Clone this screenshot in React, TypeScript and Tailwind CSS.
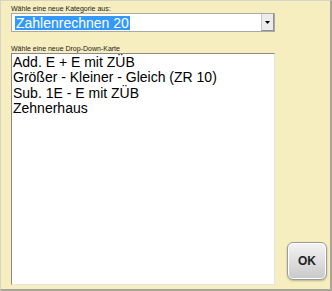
import React from 'react'

const cards = [
    'Add. E + E mit ZÜB',
    'Größer - Kleiner - Gleich (ZR 10)',
    'Sub. 1E - E mit ZÜB',
    'Zehnerhaus',
]

export default function App() {
    return (
        <div
            className="w-[332px] h-[291px] bg-[#f7eec0] border-t border-l border-[#d8d4c8] border-r-2 border-b-2 border-r-[#a8a69c] border-b-[#a8a69c] flex text-black"
            style={{ fontFamily: '"Liberation Sans", Arial, sans-serif' }}
        >
            {/* Left column: category select + card list */}
            <div className="w-[264px] ml-[10px] pt-[3px] flex flex-col">
                <div className="text-[7px] leading-[9px] h-[9px] text-[#222]">Wähle eine neue Kategorie aus:</div>

                <div className="h-[19px] bg-white border border-[#a9a9a9] flex items-stretch">
                    <div className="flex-1 flex items-center pl-[3px]">
                        <span className="bg-[#3399ff] text-white text-[14px] leading-[14px] px-[1px]">Zahlenrechnen 20</span>
                    </div>
                    <div className="w-[13px] bg-[#ececec] border-l border-[#c8c8c8] border-r border-b border-r-[#909090] border-b-[#909090] flex items-center justify-center">
                        <svg width="5" height="3" viewBox="0 0 5 3">
                            <path d="M0 0h5L2.5 3z" fill="#000" />
                        </svg>
                    </div>
                </div>

                <div className="mt-[12px] text-[7px] leading-[9px] h-[9px] text-[#222]">Wähle eine neue Drop-Down-Karte</div>

                <div className="h-[232px] bg-white border border-t-[#8a8a8a] border-l-[#8a8a8a] border-r-[#e4e4e4] border-b-[#e4e4e4] pl-[1px] pt-[1px]">
                    {cards.map((c) => (
                        <div key={c} className="text-[14px] leading-[15.3px] whitespace-nowrap">{c}</div>
                    ))}
                </div>
            </div>

            {/* OK button */}
            <div className="flex flex-col justify-end pb-[9px] ml-[12px]">
                <button className="w-[40px] h-[38px] rounded-[6px] border border-[#9a9a9a] bg-gradient-to-b from-[#f4f4f4] to-[#c9c9c9] shadow-[inset_0_0_0_1px_#ffffff,0_1px_2px_rgba(0,0,0,0.25)] text-[12px] font-bold text-[#222]">
                    OK
                </button>
            </div>
        </div>
    )
}
